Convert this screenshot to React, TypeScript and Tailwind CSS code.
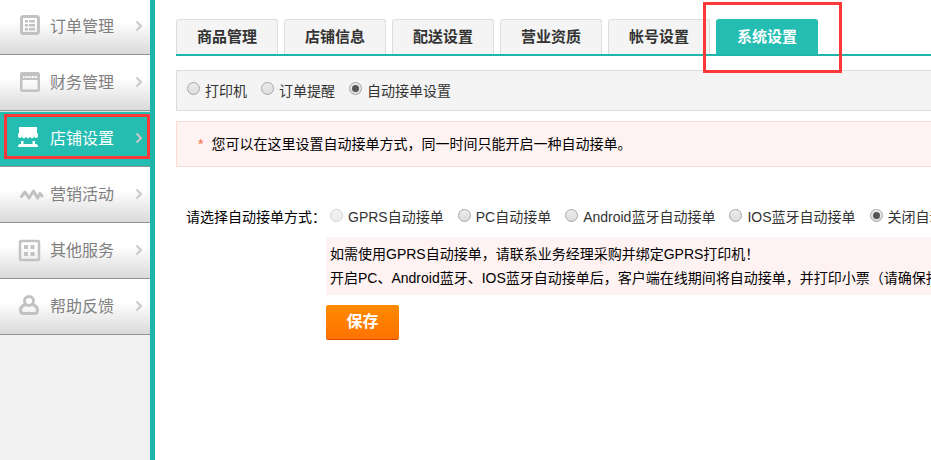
import React, { useState } from 'react';

type MenuItem = {
  id: string;
  label: string;
  icon: React.ReactNode;
};

const menuItems: MenuItem[] = [
  {
    id: 'orders',
    label: '订单管理',
    icon: (
      <>
        <rect x="3.5" y="1.5" width="17" height="17" rx="2" fill="none" stroke="currentColor" strokeWidth="3" />
        <path d="M7 5h3v2.500H7zM11 5h6v2.500h-6zM7 9h3v2.500H7zM11 9h6v2.500h-6zM7 13h3v2.500H7zM11 13h6v2.500h-6z" fill="currentColor" />
      </>
    ),
  },
  {
    id: 'finance',
    label: '财务管理',
    icon: (
      <>
        <rect x="3.250" y="2.250" width="17.500" height="17.500" rx="1" fill="none" stroke="currentColor" strokeWidth="2.500" />
        <path d="M3 2h18v7H3z" fill="currentColor" />
        <path d="M5 5h14v2H5z" fill="#fff" />
        <path d="M6 6h8M15.500 6h2.500" stroke="currentColor" strokeWidth="1" strokeDasharray="2 1" />
      </>
    ),
  },
  {
    id: 'shop',
    label: '店铺设置',
    icon: (
      <>
        <path
          d="M1 0h18v6l1 1v2c0 2.500-3 2.500-4 .5c-1 2.500-3 2.500-4 0c-1 2.500-3 2.500-4 0c-1 2.500-3 2.500-4 0c-1 2-4 2-4-.5V7l1-1z"
          fill="currentColor"
        />
        <path d="M3 14h2.500v3h9v-3H17v3h1.500l1.500 1.500V20H0v-1.500L1.500 17H3z" fill="currentColor" />
      </>
    ),
  },
  {
    id: 'marketing',
    label: '营销活动',
    icon: (
      <path
        d="M3.500 13.500l3.500-4.500l4 6l4.500-7l4 7l2.500-4.500l2 2.500"
        fill="none"
        stroke="currentColor"
        strokeWidth="3"
        strokeLinecap="round"
        strokeLinejoin="round"
      />
    ),
  },
  {
    id: 'services',
    label: '其他服务',
    icon: (
      <>
        <rect x="2" y="2" width="19" height="19" rx="1" fill="none" stroke="currentColor" strokeWidth="2.5" />
        <path d="M6 6h4v4H6zM12.500 6h4v4h-4zM6 13h4v4H6zM12.500 13h4v4h-4z" fill="currentColor" />
      </>
    ),
  },
  {
    id: 'help',
    label: '帮助反馈',
    icon: (
      <>
        <circle cx="11" cy="6" r="4.500" fill="none" stroke="currentColor" strokeWidth="3" />
        <path
          d="M7.500 9.500c-3 1-5 3-5 5.500c0 2.500 1 3.500 3 3.500h11c2 0 3-1 3-3.500c0-2.500-2-4.500-5-5.500"
          fill="none"
          stroke="currentColor"
          strokeWidth="3"
        />
      </>
    ),
  },
];

const tabs = ['商品管理', '店铺信息', '配送设置', '营业资质', '帐号设置', '系统设置'];

const sections = ['打印机', '订单提醒', '自动接单设置'];

const modes = [
  { label: 'GPRS自动接单', disabled: true },
  { label: 'PC自动接单', disabled: false },
  { label: 'Android蓝牙自动接单', disabled: false },
  { label: 'IOS蓝牙自动接单', disabled: false },
  { label: '关闭自动接单', disabled: false },
];

type RadioProps = {
  name: string;
  label: string;
  checked: boolean;
  disabled?: boolean;
  onChange: () => void;
};

function Radio({ name, label, checked, disabled, onChange }: RadioProps) {
  return (
    <label className="flex shrink-0 items-center gap-[5px] whitespace-nowrap text-[#333]">
      <input
        type="radio"
        name={name}
        checked={checked}
        disabled={disabled}
        onChange={onChange}
        className="mb-1 grid size-[13px] shrink-0 appearance-none place-items-center rounded-full border border-[#a6a6a6] bg-linear-to-b from-[#ececec] to-[#dcdcdc] checked:before:size-[7px] checked:before:rounded-full checked:before:bg-[#555] disabled:border-[#d0d0d0] disabled:from-[#f4f4f4] disabled:to-[#ececec]"
      />
      {label}
    </label>
  );
}

function Sidebar() {
  const [active, setActive] = useState('shop');

  return (
    <aside className="w-[155px] shrink-0 overflow-hidden border-r-[5px] border-[#20b5aa] bg-[#f1f1f1]">
      <nav className="-mt-px">
        {menuItems.map((item) => {
          const isActive = item.id === active;
          return (
            <a
              key={item.id}
              href={`#${item.id}`}
              onClick={() => setActive(item.id)}
              className={`relative flex h-14 items-center border-t border-b border-b-[#939393] pr-[7px] pl-[18px] text-base ${
                isActive
                  ? 'border-t-[#d5e5e3] bg-[#25bdb1] text-white'
                  : 'border-t-white bg-linear-to-b from-white from-40% to-[#dadada] text-[#808080]'
              }`}
            >
              <svg viewBox="0 0 26 24" className={`mr-1.5 h-6 w-[26px] ${isActive ? 'text-white' : 'text-[#c2c2c2]'}`}>
                {item.icon}
              </svg>
              <span className="flex-1 whitespace-nowrap">{item.label}</span>
              <svg viewBox="0 0 8 12" className="mb-0.5 h-3 w-2 text-[#c9c9c9]">
                <path d="M1.500 1.500l4.500 4.500l-4.500 4.500" fill="none" stroke="currentColor" strokeWidth="2" />
              </svg>
              {isActive && (
                <span className="pointer-events-none absolute top-[2px] right-0 bottom-[7px] left-1 border-3 border-[#fd3838]" />
              )}
            </a>
          );
        })}
      </nav>
    </aside>
  );
}

export default function App() {
  const [tab, setTab] = useState('系统设置');
  const [section, setSection] = useState('自动接单设置');
  const [mode, setMode] = useState('关闭自动接单');

  return (
    <div className="flex min-h-screen bg-white font-['Liberation_Sans','Noto_Sans_CJK_SC',sans-serif] text-sm text-black">
      <Sidebar />

      <main className="min-w-0 flex-1 overflow-hidden pt-[19px] pl-[21px]">
        <nav className="flex gap-1.5 border-b-2 border-[#20b5aa]">
          {tabs.map((name) => {
            const isActive = name === tab;
            return (
              <a
                key={name}
                href={`#${name}`}
                onClick={() => setTab(name)}
                className={`relative flex h-[35px] w-[102px] shrink-0 items-center justify-center rounded-t-[3px] border border-b-0 text-[15px] font-bold ${
                  isActive ? 'border-[#25bdb1] bg-[#25bdb1] text-white' : 'border-[#ddd] bg-[#f4f4f4] text-[#333]'
                }`}
              >
                {name}
                {isActive && (
                  <span className="pointer-events-none absolute -top-[18px] -right-[25px] -bottom-[19px] -left-[14px] z-10 border-3 border-[#fd3838]" />
                )}
              </a>
            );
          })}
        </nav>

        <fieldset className="mt-3.5 flex h-[41px] items-center gap-3.5 border border-r-0 border-[#ddd] bg-[#f4f4f4] pl-2.5">
          {sections.map((name) => (
            <Radio
              key={name}
              name="section"
              label={name}
              checked={section === name}
              onChange={() => setSection(name)}
            />
          ))}
        </fieldset>

        <p className="mt-2.5 flex h-[46px] items-center border border-r-0 border-[#fddcd5] bg-[#fff2f2] pl-[21px]">
          <span className="mr-2 text-[#f26b3a]">*</span>
          您可以在这里设置自动接单方式，同一时间只能开启一种自动接单。
        </p>

        <form className="mt-10 pl-2.5" onSubmit={(e) => e.preventDefault()}>
          <fieldset className="flex items-center">
            <legend className="float-left w-36 shrink-0 whitespace-nowrap">请选择自动接单方式：</legend>
            <div className="flex gap-3.5">
              {modes.map((m) => (
                <Radio
                  key={m.label}
                  name="mode"
                  label={m.label}
                  disabled={m.disabled}
                  checked={mode === m.label}
                  onChange={() => setMode(m.label)}
                />
              ))}
            </div>
          </fieldset>

          <div className="ml-[140px]">
            <div className="mt-2.5 bg-[#fff2f2] py-[5px] pl-1 leading-6 whitespace-nowrap">
              <p>如需使用GPRS自动接单，请联系业务经理采购并绑定GPRS打印机！</p>
              <p>开启PC、Android蓝牙、IOS蓝牙自动接单后，客户端在线期间将自动接单，并打印小票（请确保打印机已连接）</p>
            </div>
            <button
              type="submit"
              className="mt-2.5 h-[35px] w-[73px] rounded-xs border-b border-[#d94a00] bg-linear-to-b from-[#ff8a00] to-[#ff7200] text-base font-bold text-white"
            >
              保存
            </button>
          </div>
        </form>
      </main>
    </div>
  );
}
